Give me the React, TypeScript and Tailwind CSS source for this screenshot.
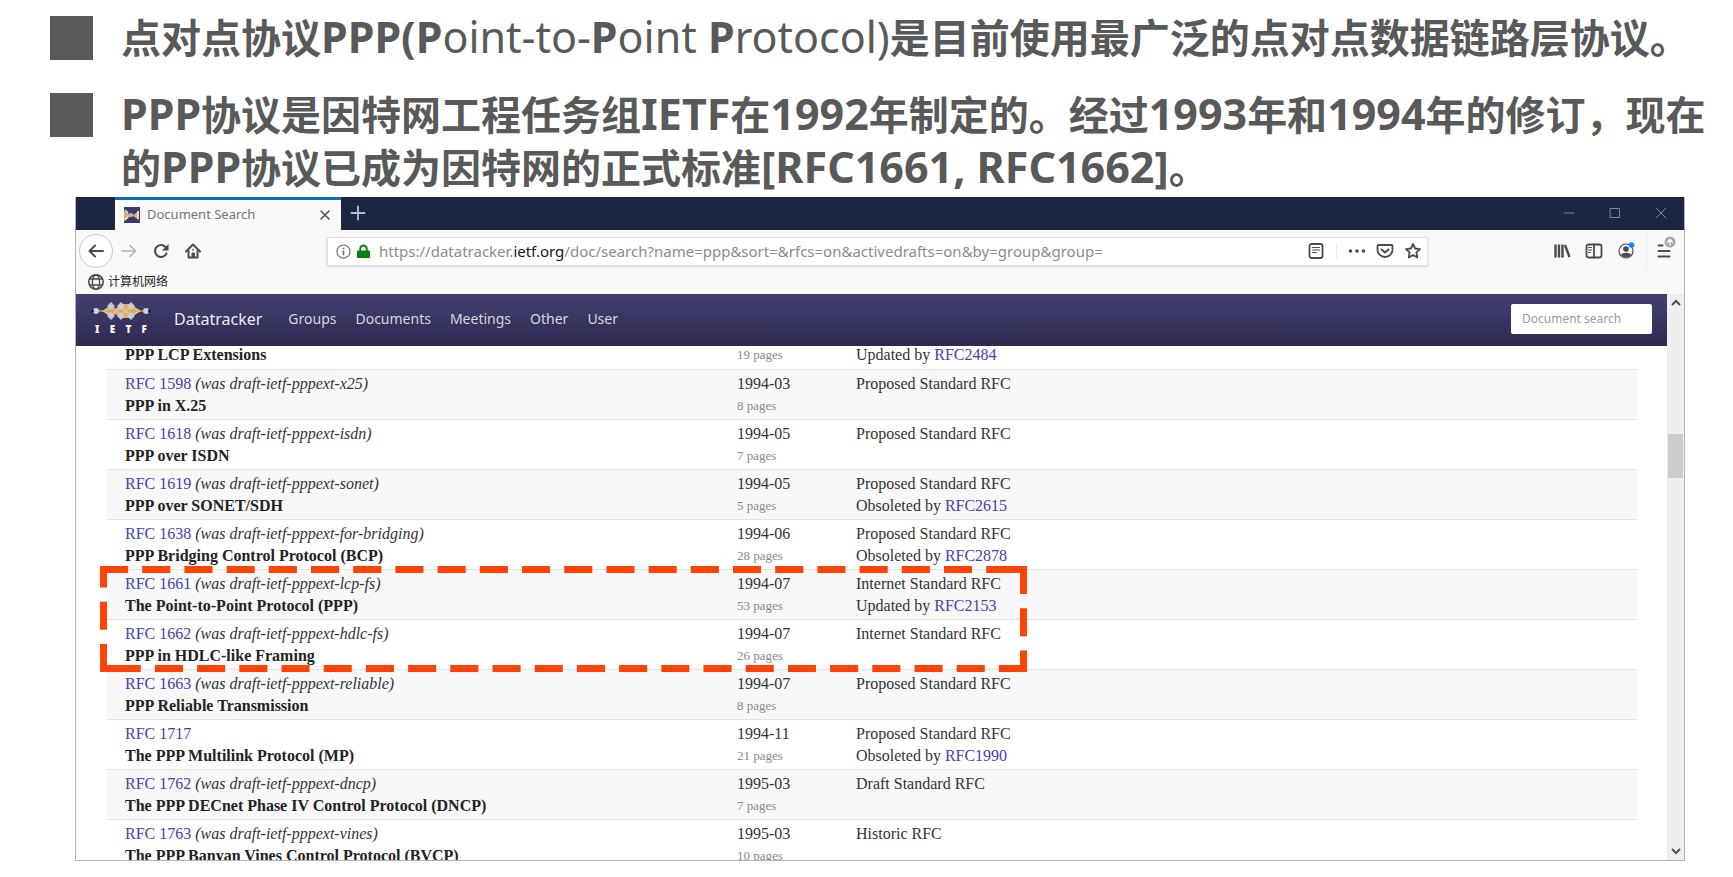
import React from "react";

type Row = {
  id?: string;
  draft?: string;
  title: string;
  date?: string;
  pages: string;
  status?: string;
  relation?: string;
  related?: string;
};

const rows: Row[] = [
  { title: "PPP LCP Extensions", pages: "19 pages", relation: "Updated by", related: "RFC2484" },
  { id: "RFC 1598", draft: "(was draft-ietf-pppext-x25)", title: "PPP in X.25", date: "1994-03", pages: "8 pages", status: "Proposed Standard RFC" },
  { id: "RFC 1618", draft: "(was draft-ietf-pppext-isdn)", title: "PPP over ISDN", date: "1994-05", pages: "7 pages", status: "Proposed Standard RFC" },
  { id: "RFC 1619", draft: "(was draft-ietf-pppext-sonet)", title: "PPP over SONET/SDH", date: "1994-05", pages: "5 pages", status: "Proposed Standard RFC", relation: "Obsoleted by", related: "RFC2615" },
  { id: "RFC 1638", draft: "(was draft-ietf-pppext-for-bridging)", title: "PPP Bridging Control Protocol (BCP)", date: "1994-06", pages: "28 pages", status: "Proposed Standard RFC", relation: "Obsoleted by", related: "RFC2878" },
  { id: "RFC 1661", draft: "(was draft-ietf-pppext-lcp-fs)", title: "The Point-to-Point Protocol (PPP)", date: "1994-07", pages: "53 pages", status: "Internet Standard RFC", relation: "Updated by", related: "RFC2153" },
  { id: "RFC 1662", draft: "(was draft-ietf-pppext-hdlc-fs)", title: "PPP in HDLC-like Framing", date: "1994-07", pages: "26 pages", status: "Internet Standard RFC" },
  { id: "RFC 1663", draft: "(was draft-ietf-pppext-reliable)", title: "PPP Reliable Transmission", date: "1994-07", pages: "8 pages", status: "Proposed Standard RFC" },
  { id: "RFC 1717", title: "The PPP Multilink Protocol (MP)", date: "1994-11", pages: "21 pages", status: "Proposed Standard RFC", relation: "Obsoleted by", related: "RFC1990" },
  { id: "RFC 1762", draft: "(was draft-ietf-pppext-dncp)", title: "The PPP DECnet Phase IV Control Protocol (DNCP)", date: "1995-03", pages: "7 pages", status: "Draft Standard RFC" },
  { id: "RFC 1763", draft: "(was draft-ietf-pppext-vines)", title: "The PPP Banyan Vines Control Protocol (BVCP)", date: "1995-03", pages: "10 pages", status: "Historic RFC" },
];

const L = ({ children }: { children: React.ReactNode }) => <span className="text-[43px] leading-none">{children}</span>;
const Thin = ({ children }: { children: React.ReactNode }) => <span className="font-normal">{children}</span>;

function Bullet({ children }: { children: React.ReactNode }) {
  return (
    <li className="flex items-start gap-[28px]">
      <span className="mt-[5px] h-11 w-[43px] shrink-0 bg-[#595959]" />
      <p className="whitespace-nowrap">{children}</p>
    </li>
  );
}

function Knot({ className }: { className: string }) {
  return (
    <svg viewBox="0 0 60 18" className={className} aria-hidden="true">
      <path d="M1 9h58" stroke="#c79a4b" strokeWidth="1.5" />
      <path d="M12 9l8-5 4 3 6-5 10 0 6 5 4 2-4 2-6 5H30l-6-4-4 3z" fill="#d3ae6b" />
      <path d="M13 9l7-5 10 9 10-9 8 5-8 5L30 5 20 14z" fill="none" stroke="#e0c080" strokeWidth="2" />
      <g fill="#cfcddb">
        <path d="M20 0l4 4-4 4-4-4zM30 0l4 4-4 4-4-4zM40 0l4 4-4 4-4-4zM20 10l4 4-4 4-4-4zM30 10l4 4-4 4-4-4zM40 10l4 4-4 4-4-4z" opacity=".9" />
        <circle cx="5" cy="9" r="3" />
        <circle cx="55" cy="9" r="3" />
      </g>
      <circle cx="1.500" cy="9" r="1.500" fill="#1d1833" />
      <circle cx="58.500" cy="9" r="1.500" fill="#1d1833" />
    </svg>
  );
}

function Ico({ label, className, children }: { label: string; className?: string; children: React.ReactNode }) {
  return (
    <button type="button" aria-label={label} className={"flex h-8 shrink-0 items-center justify-center text-[#4a4a4f] " + (className ?? "w-8")}>
      <svg viewBox="0 0 16 16" className="size-4 overflow-visible" fill="none" stroke="currentColor" strokeWidth="2" strokeLinecap="round" strokeLinejoin="round">
        {children}
      </svg>
    </button>
  );
}

function TitleBar() {
  return (
    <div className="flex h-[33px] shrink-0 bg-[#1c2541] pl-[39px]">
      <div className="flex w-[226px] items-center border-t-[3px] border-[#0a6bc4] bg-[#f9f9fa] pl-[9px] pr-1">
        <span className="flex size-4 items-center overflow-hidden bg-[#3b3a6b]">
          <svg viewBox="0 0 16 16" className="size-4" aria-hidden="true">
            <path d="M0 4l5 3 4 1 6-4v9l-6-4-4 1-5 4z" fill="#d9b36a" />
            <path d="M1 3l3 3M1 13l3-3M14 4v8" stroke="#e8e4ea" strokeWidth="1.600" />
            <circle cx="7" cy="8" r="2" fill="#bdb6c4" />
          </svg>
        </span>
        <span className="ml-[7px] flex-1 text-[13px] text-[#75757a]">Document Search</span>
        <Ico label="Close tab" className="w-6">
          <path d="M4 4l8 8M12 4l-8 8" strokeWidth="1.500" />
        </Ico>
      </div>
      <Ico label="New tab" className="w-[34px] text-[#b7bdcb]!">
        <path d="M1.500 8h13M8 1.500v13" strokeWidth="1.800" />
      </Ico>
      <div className="ml-auto flex">
        <Ico label="Minimize" className="w-[46px] text-[#7d8498]!"><path d="M3 8h10" strokeWidth="1" /></Ico>
        <Ico label="Maximize" className="w-[46px] text-[#7d8498]!"><path d="M3.500 3.500h9v9h-9z" strokeWidth="1" /></Ico>
        <Ico label="Close window" className="w-[46px] text-[#7d8498]!"><path d="M3 3l10 10M13 3L3 13" strokeWidth="1" /></Ico>
      </div>
    </div>
  );
}

function Toolbar() {
  return (
    <div className="flex h-[42px] shrink-0 items-center pl-[3px]">
      <button type="button" aria-label="Back" className="flex size-[34px] items-center justify-center rounded-full border border-[#c8c8ca] bg-white text-[#4a4a4f]">
        <svg viewBox="0 0 16 16" className="size-4" fill="none" stroke="currentColor" strokeWidth="2" strokeLinecap="round" strokeLinejoin="round">
          <path d="M15 8H1.500M7 2.500L1.500 8 7 13.500" />
        </svg>
      </button>
      <Ico label="Forward" className="w-8 text-[#b4b4b7]!"><path d="M1 8h13.500M9 2.500L14.500 8 9 13.500" strokeWidth="1.600" /></Ico>
      <Ico label="Reload">
        <path d="M13.500 10.500A6 6 0 1 1 12.500 4" />
        <path d="M15.500 1v6.500H9z" fill="currentColor" stroke="none" />
      </Ico>
      <Ico label="Home">
        <path d="M1 8.500L8 1.500l7 7" />
        <path d="M3.500 8v6.500h9V8" />
        <path d="M7 14v-4h2.500v4z" strokeWidth="1" fill="currentColor" />
        <path d="M8 6.500v.5" strokeWidth="1.500" />
      </Ico>

      <div className="ml-[118px] mr-[118px] flex h-[29px] min-w-0 flex-1 items-center border border-[#dededf] bg-white pl-2 shadow-sm">
        <svg viewBox="0 0 16 16" className="size-[15px] shrink-0" fill="none" stroke="#6f6f73" aria-hidden="true">
          <circle cx="8" cy="8" r="7" strokeWidth="1.200" />
          <path d="M8 7v5M8 4v1.500" strokeWidth="1.800" />
        </svg>
        <svg viewBox="0 0 14 16" className="ml-[6px] h-[15px] w-[13px] shrink-0" aria-hidden="true">
          <path d="M3.500 8V5a3.500 3.500 0 0 1 7 0v3" fill="none" stroke="#0b8010" strokeWidth="2" />
          <rect x="0" y="7" width="14" height="8" rx="1" fill="#0b8010" />
        </svg>
        <div role="textbox" aria-label="Address" className="ml-[9px] min-w-0 flex-1 truncate text-[15px] leading-5 text-[#8b8b8f]">
          https://datatracker.<span className="text-[#151518]">ietf.org</span>/doc/search?name=ppp&amp;sort=&amp;rfcs=on&amp;activedrafts=on&amp;by=group&amp;group=
        </div>
        <Ico label="Reader view" className="w-7">
          <rect x="1.500" y="1" width="13" height="14" rx="2" strokeWidth="1.800" />
          <path d="M4.500 4.500h7M4.500 7h7M4.500 9.500h4" strokeWidth="1" />
        </Ico>
        <span className="ml-[6px] h-4 w-px bg-[#ececec]" />
        <Ico label="Page actions" className="ml-[6px] w-7">
          <g fill="currentColor" stroke="none"><circle cx="1.500" cy="8" r="1.800" /><circle cx="8" cy="8" r="1.800" /><circle cx="14.500" cy="8" r="1.800" /></g>
        </Ico>
        <Ico label="Save to Pocket" className="w-7">
          <path d="M1.500 2h13a1 1 0 0 1 1 1v4a7.500 7 0 0 1-15 0V3a1 1 0 0 1 1-1z" strokeWidth="1.800" />
          <path d="M4.500 6.500L8 9.500l3.500-3" />
        </Ico>
        <Ico label="Bookmark this page" className="w-7">
          <path d="M8 1l2.100 4.500 4.900.6-3.600 3.300.9 5L8 12l-4.300 2.400.9-5L1 6.100l4.900-.6z" strokeWidth="1.800" />
        </Ico>
      </div>

      <Ico label="Library">
        <path d="M1.500 1.500v13M5 1.500v13M8.500 1.500v13M11 2l4.500 12" strokeWidth="2.400" strokeLinecap="butt" />
      </Ico>
      <Ico label="Sidebars">
        <rect x=".5" y="1.500" width="15" height="13" rx="2" strokeWidth="1.800" />
        <path d="M8 1.500v13" strokeWidth="1.800" />
        <path d="M2.500 4.500h3M2.500 7h3M2.500 9.500h2" strokeWidth="1" />
      </Ico>
      <Ico label="Account">
        <circle cx="8" cy="8" r="7" strokeWidth="1.200" />
        <circle cx="8" cy="6" r="2.800" fill="currentColor" stroke="none" />
        <path d="M3 12c1-3 9-3 10 0-2 3-8 3-10 0z" fill="currentColor" stroke="none" />
        <circle cx="13.500" cy="2" r="2.800" fill="#0a84ff" stroke="none" />
      </Ico>
      <span className="ml-1 h-9 w-px bg-[#ebebec]" />
      <Ico label="Open menu" className="ml-px mr-1 w-8">
        <path d="M2.500 2.500h4M2.500 8h11M2.500 13.500h11" />
        <circle cx="14" cy="-1" r="5.500" fill="#a9a9ab" stroke="none" />
        <path d="M14 2v-5M11.500-1L14-3.500 16.500-1" stroke="#fff" strokeWidth="1.300" />
      </Ico>
    </div>
  );
}

function SiteNav() {
  return (
    <nav className="flex h-[52px] shrink-0 items-center bg-linear-to-b from-[#424170] to-[#2e2950] px-[15px] pb-[3px] text-[14px] text-[#d5d4df]">
      <a href="#home" aria-label="IETF home" className="flex w-[60px] flex-col">
        <Knot className="h-[18px] w-[60px]" />
        <span className="mt-[2px] flex justify-between px-1 text-[10px] leading-[14px] font-black text-white">
          <span>I</span><span>E</span><span>T</span><span>F</span>
        </span>
      </a>
      <a href="#datatracker" className="ml-[23px] text-[16px] text-[#ecebf2]">Datatracker</a>
      <div className="ml-[26px] flex gap-[19px]">
        <a href="#groups">Groups</a>
        <a href="#documents">Documents</a>
        <a href="#meetings">Meetings</a>
        <a href="#other">Other</a>
        <a href="#user">User</a>
      </div>
      <input type="search" aria-label="Document search" placeholder="Document search" className="ml-auto h-[30px] w-[141px] rounded-[2px] bg-white px-[11px] text-[12px] text-[#333] placeholder:text-[#9a9a9a]" />
    </nav>
  );
}

function Highlight() {
  return (
    <svg viewBox="0 0 927 106" className="pointer-events-none absolute top-[220px] -left-[7px] h-[106px] w-[927px]" fill="none" stroke="#ff4206" strokeWidth="7" aria-hidden="true">
      <g strokeDasharray="28.1 14.1">
        <path d="M0 3.500H927" />
        <path d="M923.500 0V106" />
        <path d="M927 102.500H0" />
        <path d="M3.500 106V0" />
      </g>
      <path d="M912 3.500H927M0 102.500H13" />
    </svg>
  );
}

function Results() {
  return (
    <div className="relative ml-[31px] mr-[30px]">
      <table className="w-full table-fixed border-collapse text-left font-['Liberation_Serif',serif] text-[16px] leading-[22px] text-[#333]">
        <colgroup>
          <col className="w-[630px]" />
          <col className="w-[119px]" />
          <col />
        </colgroup>
        <tbody>
          {rows.map((r) => {
            const cell = r.id ? "pt-[3px] pb-[2px]" : "pb-[5px] leading-[18px]";
            return (
              <tr key={r.title} className="border-t border-[#e4e4e4] align-top first:border-t-0 even:bg-[#f8f8f8]">
                <td className={"pl-[18px] " + cell}>
                  {r.id && (
                    <div>
                      <a href={"#" + r.id.replace(" ", "")} className="text-[#4640b4]">{r.id}</a> <i>{r.draft}</i>
                    </div>
                  )}
                  <b className="block text-[#222]">{r.title}</b>
                </td>
                <td className={cell}>
                  {r.date && <div>{r.date}</div>}
                  <div className="text-[13px] text-[#8a8a8a]">{r.pages}</div>
                </td>
                <td className={cell}>
                  {r.status && <div>{r.status}</div>}
                  {r.related && (
                    <div>
                      {r.relation} <a href={"#" + r.related} className="text-[#4640b4]">{r.related}</a>
                    </div>
                  )}
                </td>
              </tr>
            );
          })}
        </tbody>
      </table>
      <Highlight />
    </div>
  );
}

export default function App() {
  return (
    <main className="flex h-screen flex-col overflow-hidden bg-white pb-4 font-['Noto_Sans','Noto_Sans_CJK_SC',sans-serif]">
      <ul className="flex shrink-0 flex-col gap-6 pt-[11px] pb-[3px] pl-[50px] text-[40px] leading-[53px] font-bold text-[#595959]">
        <Bullet>
          点对点协议<L>PPP(P<Thin>oint-to-</Thin>P<Thin>oint </Thin>P<Thin>rotocol)</Thin></L>是目前使用最广泛的点对点数据链路层协议。
        </Bullet>
        <Bullet>
          <L>PPP</L>协议是因特网工程任务组<L>IETF</L>在<L>1992</L>年制定的。经过<L>1993</L>年和<L>1994</L>年的修订，现在
          <br />
          的<L>PPP</L>协议已成为因特网的正式标准<L>[RFC1661, RFC1662]</L>。
        </Bullet>
      </ul>
      <section className="mr-12 ml-[75px] flex min-h-0 flex-1 flex-col overflow-hidden border border-t-0 border-[#b4b4b8] bg-[#f9f9fa]">
        <TitleBar />
        <Toolbar />
        <div className="flex h-[22px] shrink-0 items-center gap-1 pb-[3px] pl-3 text-[12px] text-[#1f1f22]">
          <svg viewBox="0 0 16 16" className="size-4" fill="none" stroke="#4a4a4f" strokeWidth="1.300" aria-hidden="true">
            <circle cx="8" cy="8" r="7.200" strokeWidth="1.600" />
            <ellipse cx="8" cy="8" rx="3.600" ry="7" />
            <path d="M1.500 5h13M1.500 11h13" />
          </svg>
          <a href="#bookmark">计算机网络</a>
        </div>
        <div className="flex min-h-0 flex-1">
          <div className="flex min-w-0 flex-1 flex-col bg-white">
            <SiteNav />
            <div className="min-h-0 flex-1 overflow-hidden">
              <Results />
            </div>
          </div>
          <div className="flex w-[17px] flex-col items-center bg-[#efefef] py-1">
            <svg viewBox="0 0 10 10" className="size-[10px]" fill="none" stroke="#505050" strokeWidth="2"><path d="M1 7l4-4 4 4" /></svg>
            <span className="mt-[126px] h-11 w-[15px] bg-[#cdcdcd]" />
            <svg viewBox="0 0 10 10" className="mt-auto size-[10px]" fill="none" stroke="#505050" strokeWidth="2"><path d="M1 3l4 4 4-4" /></svg>
          </div>
        </div>
      </section>
    </main>
  );
}
